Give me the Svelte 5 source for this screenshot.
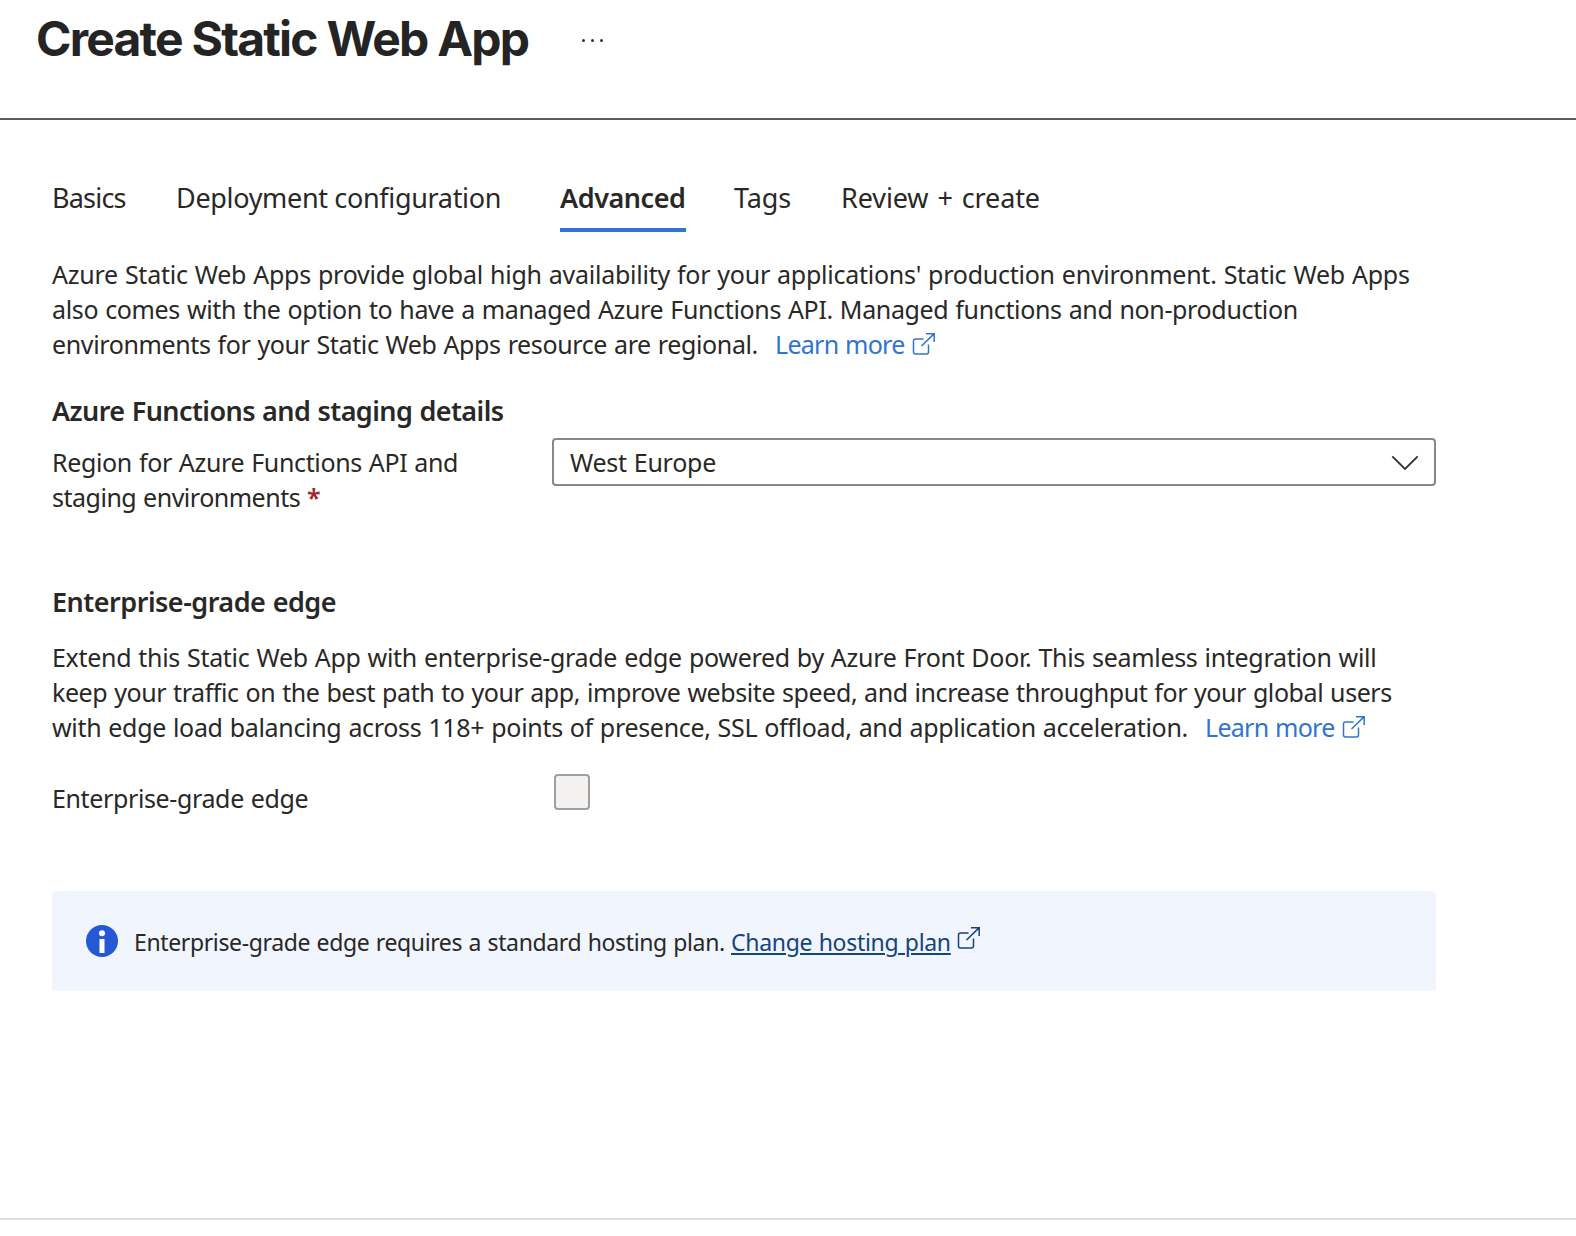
<script>
  const tabs = [
    { id: 'basics', label: 'Basics' },
    { id: 'deployment', label: 'Deployment configuration' },
    { id: 'advanced', label: 'Advanced' },
    { id: 'tags', label: 'Tags' },
    { id: 'review', label: 'Review + create' }
  ];
  let active = $state('advanced');
</script>

{#snippet external()}
  <svg class="external" viewBox="0 0 24 24" width="24" height="24" aria-hidden="true">
    <path d="M11.5 7H3.5a2 2 0 0 0-2 2v11a2 2 0 0 0 2 2h11a2 2 0 0 0 2-2v-7.5" />
    <path d="M9.5 14 22 1.9M14 1.7h8.2v8.3" />
  </svg>
{/snippet}

<div class="page">
  <header>
    <h1>Create Static Web App</h1>
    <button class="more" aria-label="More actions"><i></i><i></i><i></i></button>
  </header>

  <main>
    <nav>
      {#each tabs as tab (tab.id)}
        <button class="tab {tab.id}" class:active={active === tab.id} onclick={() => (active = tab.id)}>{tab.label}</button>
      {/each}
    </nav>

    <p class="intro">
      <span class="line a1">Azure Static Web Apps provide global high availability for your applications' production environment. Static Web Apps</span>
      <span class="line a2">also comes with the option to have a managed Azure Functions API. Managed functions and non-production</span>
      <span class="line a3"><span>environments for your Static Web Apps resource are regional.</span><a href="#functions">Learn more</a>{@render external()}</span>
    </p>

    <h2 class="staging">Azure Functions and staging details</h2>
    <div class="field region">
      <div class="label">
        <span class="line r1">Region for Azure Functions API and</span>
        <span class="line r2">staging environments <b>*</b></span>
      </div>
      <div class="select">
        <span>West Europe</span>
        <svg viewBox="0 0 28 16" width="28" height="16" aria-hidden="true"><path d="M1.3 1.3 14 14 26.7 1.3" /></svg>
      </div>
    </div>

    <h2 class="edge">Enterprise-grade edge</h2>
    <p class="extend">
      <span class="line e1">Extend this Static Web App with enterprise-grade edge powered by Azure Front Door. This seamless integration will</span>
      <span class="line e2">keep your traffic on the best path to your app, improve website speed, and increase throughput for your global users</span>
      <span class="line e3"><span>with edge load balancing across 118+ points of presence, SSL offload, and application acceleration.</span><a href="#edge">Learn more</a>{@render external()}</span>
    </p>
    <div class="field check">
      <div class="label"><span class="line c1">Enterprise-grade edge</span></div>
      <div class="box"></div>
    </div>

    <div class="notice">
      <svg class="info" viewBox="0 0 32 32" width="32" height="32" aria-hidden="true">
        <circle cx="16" cy="16" r="16" /><circle class="mark" cx="16" cy="8.2" r="3" /><rect class="mark" x="13.5" y="14" width="5" height="14" />
      </svg>
      <span class="message">Enterprise-grade edge requires a standard hosting plan.</span>
      <a href="#plan">Change hosting plan</a>{@render external()}
    </div>
  </main>
  <footer></footer>
</div>

<style>
  :global(body) { margin: 0; background: #fff; }
  .page {
    display: flex; flex-direction: column; box-sizing: border-box; height: 1236px;
    color: #292827; font: 25px/35px "Noto Sans", "Open Sans", sans-serif; word-spacing: 0.8px;
  }
  header { display: flex; box-sizing: border-box; height: 120px; padding: 9px 36px 0; border-bottom: 2px solid #5c5c5c; }
  h1 { margin: 0; width: 546px; font: 700 48px/60px Inter, sans-serif; letter-spacing: -1.8px; word-spacing: 0.3px; color: #242424; white-space: nowrap; }
  button { padding: 0; border: 0; background: none; font: inherit; color: inherit; }
  .more { display: flex; align-items: center; gap: 6px; height: 62px; }
  .more i { width: 3px; height: 3px; border-radius: 50%; background: #333; }
  main { flex: 1; box-sizing: border-box; width: 1436px; padding: 58px 0 0 52px; }
  nav { display: flex; height: 54px; font-size: 27px; line-height: 40px; }
  .tab { box-sizing: border-box; height: 54px; padding-bottom: 10px; border-bottom: 4px solid transparent; text-align: left; white-space: nowrap; }
  .tab.active { font-weight: 600; border-color: #3274d1; }
  .basics { width: 124px; letter-spacing: -0.8px; }
  .deployment { width: 384px; letter-spacing: -0.33px; }
  .advanced { width: 126px; margin-right: 48px; letter-spacing: -0.45px; }
  .tags { width: 107px; letter-spacing: -0.1px; }
  .review { letter-spacing: -0.1px; word-spacing: 2px; }
  p { margin: 0; }
  .intro { margin-top: 25px; }
  .line { display: block; height: 35px; white-space: nowrap; }
  .a1 { letter-spacing: -0.252px; }
  .a2 { letter-spacing: -0.35px; }
  .a3, .e3 { display: flex; }
  .a3 span { width: 723px; letter-spacing: -0.37px; }
  .e3 span { width: 1153px; letter-spacing: -0.317px; }
  a { color: #3074d2; text-decoration: none; letter-spacing: -0.72px; }
  .external { flex: none; fill: none; stroke: #3074d2; stroke-width: 1.5; }
  .line .external { margin: 5px 0 0 7.5px; }
  h2 { margin: 0; font-size: 27px; font-weight: 600; line-height: 36px; white-space: nowrap; }
  .staging { margin-top: 31px; letter-spacing: -0.58px; }
  .field { display: flex; }
  .region { margin-top: 9px; }
  .label { width: 500px; padding-top: 7px; }
  .r1 { letter-spacing: -0.35px; }
  .r2 { letter-spacing: -0.49px; }
  .r2 b { color: #a4262c; font-weight: 600; }
  .select {
    display: flex; align-items: center; justify-content: space-between; box-sizing: border-box;
    width: 884px; height: 48px; padding: 0 15px 0 16px; border: 2px solid #8a8886; border-radius: 4px; letter-spacing: -0.27px;
  }
  .select svg { margin-top: 2px; fill: none; stroke: #323130; stroke-width: 1.8; }
  .edge { margin-top: 69px; letter-spacing: -0.5px; }
  .extend { margin-top: 20px; }
  .e1 { letter-spacing: -0.3px; }
  .e2 { letter-spacing: -0.415px; }
  .check { margin-top: 29px; }
  .c1 { letter-spacing: -0.37px; }
  .box { box-sizing: border-box; width: 36px; height: 36px; margin-left: 2px; border: 2px solid #a19f9d; border-radius: 4px; background: #f3f2f1; }
  .notice { display: flex; align-items: center; box-sizing: border-box; height: 100px; margin-top: 75px; padding-left: 34px; border-radius: 4px; background: #f0f5fe; font-size: 23px; white-space: nowrap; }
  .info { fill: #2459d3; }
  .mark { fill: #fff; }
  .message { width: 597px; padding-top: 2px; margin-left: 16px; letter-spacing: -0.365px; }
  .notice a { padding-top: 2px; color: #15437c; letter-spacing: -0.3px; text-decoration: underline; text-decoration-thickness: 2px; text-underline-offset: 2px; }
  .notice .external { margin: 0 0 6px 6px; stroke: #15437c; }
  footer { height: 16px; border-top: 2px solid #e0e0e0; }
</style>
